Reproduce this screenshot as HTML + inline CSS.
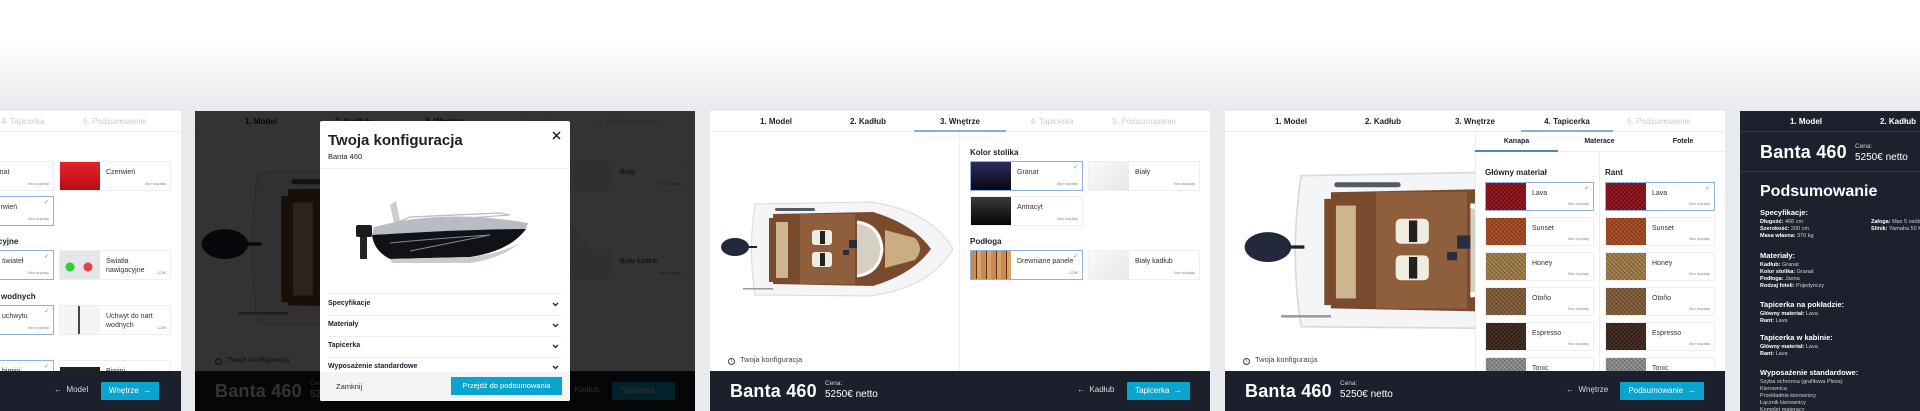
<!DOCTYPE html>
<html><head><meta charset="utf-8">
<style>
*{margin:0;padding:0;box-sizing:border-box}
html,body{width:1920px;height:411px;overflow:hidden}
body{position:relative;font-family:"Liberation Sans",sans-serif;color:#1b202c;background:linear-gradient(#fff 0,#fff 40px,#e8eaed 111px,#e8eaed 411px)}
#w{position:absolute;left:0;top:0;width:1920px;height:411px;overflow:hidden}
.p{position:absolute;top:111px;width:500px;height:300px;background:#fff;overflow:hidden}
.tabs{position:absolute;left:0;top:0;width:500px;height:21px;border-bottom:1px solid #eceef2}
.t{position:absolute;top:0;width:92px;height:21px;line-height:21px;text-align:center;font-size:8px;font-weight:bold;color:#1b202c}
.t.d{color:#c6cbd3;font-weight:normal}
.t.a{border-bottom:2px solid #86aede}
.ft{position:absolute;left:0;top:260px;width:500px;height:40px;background:#1b202c;color:#fff}
.bn{position:absolute;left:20px;top:10px;font-size:18px;font-weight:600;letter-spacing:.2px}
.cn{position:absolute;left:115px;top:9px;font-size:6.5px;color:#cfd3da}
.pr{position:absolute;left:115px;top:18px;font-size:10px}
.bk{position:absolute;top:14px;font-size:8px;color:#d8dbe0}
.btn{position:absolute;top:11px;height:18px;background:#0ba4cf;color:#fff;font-size:8px;line-height:18px;text-align:center;border-radius:1px}
.c{position:absolute;height:30px;border:1px solid #eceef2;background:#fff}
.c.s{border-color:#8fb2dc}
.sw{position:absolute;left:0;top:0;bottom:0;width:40px}
.nm{position:absolute;left:46px;top:6px;font-size:7px;color:#333;line-height:9px}
.bz{position:absolute;right:4px;bottom:4px;font-size:4px;color:#888}
.ck{position:absolute;right:4px;top:2px;font-size:6px;color:#4a90d9}
.h{position:absolute;font-size:8px;font-weight:bold;color:#1b202c}
.fab{background-image:repeating-linear-gradient(45deg,rgba(0,0,0,.25) 0 1px,transparent 1px 3px),repeating-linear-gradient(-45deg,rgba(255,255,255,.12) 0 1px,transparent 1px 3px)}
.info{position:absolute;font-size:7.5px;color:#444}
.info i{display:inline-block;width:7px;height:7px;border:1px solid #444;border-radius:50%;font-size:5px;line-height:5px;text-align:center;font-style:normal;margin-right:5px;vertical-align:0}
.sm{font-size:5.5px;color:#cfd3da;line-height:7px}
.sm b{color:#fff;font-weight:bold}
.chev{position:absolute;left:232px}
</style></head><body><div id="w">

<svg width="0" height="0" style="position:absolute">
<defs>
<g id="top">
<path d="M10,4 L125,2 Q185,10 208,49 Q185,88 125,96 L10,95 Q3,50 10,4 Z" fill="#f4f5f7" stroke="#d6d9de" stroke-width="1"/>
<path d="M28,14 L128,12 Q168,24 186,49 Q168,74 128,86 L28,84 Z" fill="#7a4a2d"/>
<rect x="55" y="14" width="55" height="70" fill="#8f5e3d"/>
<path d="M140,30 L170,38 Q180,49 170,60 L140,68 Z" fill="#c8ae80"/>
<rect x="24" y="18" width="8" height="64" fill="#7a4a2d"/>
<rect x="31" y="22" width="12" height="56" fill="#cdb58e"/>
<rect x="67" y="30" width="20" height="15" rx="3" fill="#f1ece0"/>
<rect x="75" y="31" width="5" height="13" fill="#222"/>
<rect x="67" y="52" width="20" height="15" rx="3" fill="#f1ece0"/>
<rect x="75" y="53" width="5" height="13" fill="#222"/>
<path d="M112,22 Q135,25 137,49 Q135,73 112,76" fill="#d4d0c2" stroke="#fff" stroke-width="3"/>
<rect x="104" y="40" width="8" height="8" fill="#2a2e3c"/>
<rect x="98" y="50" width="6" height="5" fill="#2a2e3c"/>
<rect x="30" y="8" width="40" height="3" rx="1.5" fill="#555a66"/>
<ellipse cx="-10" cy="47" rx="14" ry="9" fill="#23283b"/>
<rect x="2" y="46" width="10" height="2" fill="#222"/>
<rect x="-2" y="88" width="30" height="1.5" fill="#999"/>
</g>
</defs>
</svg>

<!-- PANEL 1 -->
<div class="p" style="left:-319px">
 <div class="tabs">
  <div class="t" style="left:20px">1. Model</div><div class="t a" style="left:112px">2. Kadłub</div><div class="t d" style="left:204px">3. Wnętrze</div><div class="t d" style="left:296px">4. Tapicerka</div><div class="t d" style="left:388px">5. Podsumowanie</div>
 </div>
 <div class="c" style="left:260px;top:50px;width:113px"><div class="sw" style="background:#1d2040"></div><div class="nm">Granat</div><div class="bz">Bez dopłaty</div></div>
 <div class="c" style="left:378px;top:50px;width:112px"><div class="sw" style="background:linear-gradient(#e4262a,#b90d12)"></div><div class="nm">Czerwień</div><div class="bz">Bez dopłaty</div></div>
 <div class="c s" style="left:260px;top:85px;width:113px"><div class="sw" style="background:#ccc"></div><div class="nm">Czerwień</div><div class="ck">✓</div><div class="bz">Bez dopłaty</div></div>
 <div class="h" style="left:260px;top:126px">Światła nawigacyjne</div>
 <div class="c s" style="left:260px;top:139px;width:113px"><div class="sw" style="background:#eee"></div><div class="nm">Bez świateł</div><div class="ck">✓</div><div class="bz">Bez dopłaty</div></div>
 <div class="c" style="left:378px;top:139px;width:112px"><div class="sw" style="background:radial-gradient(circle at 10px 16px,#3c3 0 4px,transparent 5px),radial-gradient(circle at 28px 16px,#d44 0 4px,transparent 5px),#e4e6ea"></div><div class="nm">Światła<br>nawigacyjne</div><div class="bz">123€</div></div>
 <div class="h" style="left:260px;top:181px">Uchwyt do nart wodnych</div>
 <div class="c s" style="left:260px;top:194px;width:113px"><div class="sw" style="background:#eee"></div><div class="nm">Bez uchwytu</div><div class="ck">✓</div><div class="bz">Bez dopłaty</div></div>
 <div class="c" style="left:378px;top:194px;width:112px"><div class="sw" style="background:linear-gradient(90deg,#f5f5f5 0 18px,#444 18px 20px,#f5f5f5 20px)"></div><div class="nm">Uchwyt do nart<br>wodnych</div><div class="bz">123€</div></div>
 <div class="c s" style="left:260px;top:249px;width:113px"><div class="sw" style="background:#eee"></div><div class="nm">Bez bimini</div><div class="ck">✓</div></div>
 <div class="c" style="left:378px;top:249px;width:112px"><div class="sw" style="background:linear-gradient(#fff 0 6px,#222 6px)"></div><div class="nm">Bimini</div></div>
 <div class="ft">
  <div class="bn">Banta 460</div>
  <div class="bk" style="left:373px">←&nbsp; Model</div>
  <div class="btn" style="left:420px;width:58px">Wnętrze &nbsp;→</div>
 </div>
</div>

<!-- PANEL 2 -->
<div class="p" style="left:195px">
 <div class="tabs">
  <div class="t" style="left:20px">1. Model</div><div class="t" style="left:112px">2. Kadłub</div><div class="t" style="left:204px">3. Wnętrze</div><div class="t d" style="left:296px">4. Tapicerka</div><div class="t d" style="left:388px">5. Podsumowanie</div>
 </div>
 <svg style="position:absolute;left:5px;top:55px" width="390" height="166" viewBox="-25 0 235 100"><use href="#top"/></svg>
 <div class="c" style="left:378px;top:50px;width:112px"><div class="sw" style="background:#eee"></div><div class="nm">Biały</div><div class="bz">Bez dopłaty</div></div>
 <div class="c" style="left:378px;top:139px;width:112px"><div class="sw" style="background:#eee"></div><div class="nm">Biały kadłub</div><div class="bz">Bez dopłaty</div></div>
 <div class="info" style="left:20px;top:244px"><i>i</i>Twoja konfiguracja</div>
 <div class="ft">
  <div class="bn">Banta 460</div><div class="cn">Cena:</div><div class="pr">5250€ netto</div>
  <div class="bk" style="left:367px">←&nbsp; Kadłub</div>
  <div class="btn" style="left:417px;width:63px">Tapicerka &nbsp;→</div>
 </div>
 <div style="position:absolute;left:0;top:0;width:500px;height:300px;background:rgba(0,0,0,.8)"></div>
 <div style="position:absolute;left:125px;top:10px;width:250px;height:280px;background:#fff;border-radius:2px;overflow:hidden">
  <div style="position:absolute;left:8px;top:11px;font-size:15px;font-weight:600">Twoja konfiguracja</div>
  <div style="position:absolute;left:8px;top:31px;font-size:7.5px">Banta 460</div>
  <svg style="position:absolute;left:232px;top:10px" width="9" height="9" viewBox="0 0 9 9"><path d="M1,1 L8,8 M8,1 L1,8" stroke="#1b202c" stroke-width="1.5"/></svg>
  <div style="position:absolute;left:0;top:47px;width:250px;border-top:1px solid #eceef2"></div>
  <svg style="position:absolute;left:30px;top:78px" width="184" height="68" viewBox="0 0 184 68">
   <path d="M40,6 L46,2 L50,22 L44,24 Z" fill="#c9ccd2"/>
   <path d="M46,24 L160,16 L150,14 L60,18 Z" fill="none" stroke="#bbb" stroke-width="1.2"/>
   <path d="M50,22 Q110,12 178,24 L176,30 Q120,30 22,36 L24,28 Z" fill="#b8bcc4"/>
   <path d="M22,36 Q120,30 176,30 Q160,52 120,58 L40,60 Q24,52 22,36 Z" fill="#101218"/>
   <path d="M40,44 Q80,40 140,36 Q90,46 60,52" fill="none" stroke="#888" stroke-width="1"/>
   <path d="M40,60 L120,58 Q150,55 170,44 Q150,60 120,64 L42,64 Z" fill="#c8ccd2"/>
   <rect x="6" y="26" width="16" height="12" rx="2" fill="#1a1c22"/>
   <rect x="10" y="38" width="7" height="22" fill="#22242a"/>
  </svg>
  <div style="position:absolute;left:8px;right:8px;top:172px;border-top:1px solid #eceef2"></div>
  <div style="position:absolute;left:8px;right:8px;top:194px;border-top:1px solid #eceef2"></div>
  <div style="position:absolute;left:8px;right:8px;top:215px;border-top:1px solid #eceef2"></div>
  <div style="position:absolute;left:8px;right:8px;top:236px;border-top:1px solid #eceef2"></div>
  <div class="h" style="left:8px;top:179px;font-size:7px">Specyfikacje</div>
  <div class="h" style="left:8px;top:200px;font-size:7px">Materiały</div>
  <div class="h" style="left:8px;top:221px;font-size:7px">Tapicerka</div>
  <div class="h" style="left:8px;top:242px;font-size:7px">Wyposażenie standardowe</div>
  <svg class="chev" style="top:181px" width="7" height="5" viewBox="0 0 7 5"><path d="M1,1 L3.5,3.5 L6,1" fill="none" stroke="#1b202c" stroke-width="1.3"/></svg>
  <svg class="chev" style="top:202px" width="7" height="5" viewBox="0 0 7 5"><path d="M1,1 L3.5,3.5 L6,1" fill="none" stroke="#1b202c" stroke-width="1.3"/></svg>
  <svg class="chev" style="top:223px" width="7" height="5" viewBox="0 0 7 5"><path d="M1,1 L3.5,3.5 L6,1" fill="none" stroke="#1b202c" stroke-width="1.3"/></svg>
  <svg class="chev" style="top:244px" width="7" height="5" viewBox="0 0 7 5"><path d="M1,1 L3.5,3.5 L6,1" fill="none" stroke="#1b202c" stroke-width="1.3"/></svg>
  <div style="position:absolute;left:0;top:251px;width:250px;height:29px;background:#f3f4f6">
   <div style="position:absolute;left:16px;top:10px;font-size:7.5px;color:#333">Zamknij</div>
   <div style="position:absolute;left:131px;top:5px;width:111px;height:18px;background:#0ba4cf;color:#fff;font-size:7.5px;line-height:18px;text-align:center">Przejdź do podsumowania</div>
  </div>
 </div>
</div>

<!-- PANEL 3 -->
<div class="p" style="left:710px">
 <div class="tabs">
  <div class="t" style="left:20px">1. Model</div><div class="t" style="left:112px">2. Kadłub</div><div class="t a" style="left:204px">3. Wnętrze</div><div class="t d" style="left:296px">4. Tapicerka</div><div class="t d" style="left:388px">5. Podsumowanie</div>
 </div>
 <div style="position:absolute;left:249px;top:21px;height:239px;border-left:1px solid #eceef2"></div>
 <svg style="position:absolute;left:10px;top:89px" width="235" height="100" viewBox="-25 0 235 100"><use href="#top"/></svg>
 <div class="h" style="left:260px;top:37px">Kolor stolika</div>
 <div class="c s" style="left:260px;top:50px;width:113px"><div class="sw" style="background:linear-gradient(#2a2d5c,#070814)"></div><div class="nm">Granat</div><div class="ck">✓</div><div class="bz">Bez dopłaty</div></div>
 <div class="c" style="left:378px;top:50px;width:112px"><div class="sw" style="background:linear-gradient(135deg,#fafafa,#e6e6e6)"></div><div class="nm">Biały</div><div class="bz">Bez dopłaty</div></div>
 <div class="c" style="left:260px;top:85px;width:113px"><div class="sw" style="background:linear-gradient(#3a3a3a,#050505)"></div><div class="nm">Antracyt</div><div class="bz">Bez dopłaty</div></div>
 <div class="h" style="left:260px;top:126px">Podłoga</div>
 <div class="c s" style="left:260px;top:139px;width:113px"><div class="sw" style="background:repeating-linear-gradient(90deg,#c98a52 0 5px,#5a3418 5px 6px,#d9a068 6px 10px)"></div><div class="nm">Drewniane panele</div><div class="ck">✓</div><div class="bz">123€</div></div>
 <div class="c" style="left:378px;top:139px;width:112px"><div class="sw" style="background:linear-gradient(135deg,#fafafa,#e8e8e8)"></div><div class="nm">Biały kadłub</div><div class="bz">Bez dopłaty</div></div>
 <div class="info" style="left:18px;top:244px"><i>i</i>Twoja konfiguracja</div>
 <div class="ft">
  <div class="bn">Banta 460</div><div class="cn">Cena:</div><div class="pr">5250€ netto</div>
  <div class="bk" style="left:367px">←&nbsp; Kadłub</div>
  <div class="btn" style="left:417px;width:63px">Tapicerka &nbsp;→</div>
 </div>
</div>

<!-- PANEL 4 -->
<div class="p" style="left:1225px">
 <div class="tabs">
  <div class="t" style="left:20px">1. Model</div><div class="t" style="left:112px">2. Kadłub</div><div class="t" style="left:204px">3. Wnętrze</div><div class="t a" style="left:296px">4. Tapicerka</div><div class="t d" style="left:388px">5. Podsumowanie</div>
 </div>
 <svg style="position:absolute;left:18px;top:58px" width="390" height="166" viewBox="-25 0 235 100"><use href="#top"/></svg>
 <div style="position:absolute;left:250px;top:21px;width:250px;height:239px;background:#fff;border-left:1px solid #eceef2"></div>
 <div style="position:absolute;left:250px;top:21px;width:250px;height:20px;border-bottom:1px solid #eceef2"></div>
 <div class="t" style="left:250px;top:21px;width:83px;height:20px;line-height:20px;font-size:7px;border-bottom:2px solid #4f86c6">Kanapa</div>
 <div class="t" style="left:333px;top:21px;width:83px;height:20px;line-height:20px;font-size:7px">Materace</div>
 <div class="t" style="left:416px;top:21px;width:84px;height:20px;line-height:20px;font-size:7px">Fotele</div>
 <div style="position:absolute;left:374px;top:41px;height:219px;border-left:1px solid #eceef2"></div>
 <div class="h" style="left:260px;top:57px">Główny materiał</div>
 <div class="h" style="left:380px;top:57px">Rant</div>
 <div class="c s" style="left:260px;top:71px;width:109px;height:29px"><div class="sw fab" style="background-color:#8c0c16"></div><div class="nm">Lava</div><div class="ck">✓</div><div class="bz">Bez dopłaty</div></div>
 <div class="c s" style="left:380px;top:71px;width:110px;height:29px"><div class="sw fab" style="background-color:#8c0c16"></div><div class="nm">Lava</div><div class="ck">✓</div><div class="bz">Bez dopłaty</div></div>
 <div class="c" style="left:260px;top:106px;width:109px;height:29px"><div class="sw fab" style="background-color:#a5481d"></div><div class="nm">Sunset</div><div class="bz">Bez dopłaty</div></div>
 <div class="c" style="left:380px;top:106px;width:110px;height:29px"><div class="sw fab" style="background-color:#a5481d"></div><div class="nm">Sunset</div><div class="bz">Bez dopłaty</div></div>
 <div class="c" style="left:260px;top:141px;width:109px;height:29px"><div class="sw fab" style="background-color:#a07c46"></div><div class="nm">Honey</div><div class="bz">Bez dopłaty</div></div>
 <div class="c" style="left:380px;top:141px;width:110px;height:29px"><div class="sw fab" style="background-color:#a07c46"></div><div class="nm">Honey</div><div class="bz">Bez dopłaty</div></div>
 <div class="c" style="left:260px;top:176px;width:109px;height:29px"><div class="sw fab" style="background-color:#7e5b35"></div><div class="nm">Otoño</div><div class="bz">Bez dopłaty</div></div>
 <div class="c" style="left:380px;top:176px;width:110px;height:29px"><div class="sw fab" style="background-color:#7e5b35"></div><div class="nm">Otoño</div><div class="bz">Bez dopłaty</div></div>
 <div class="c" style="left:260px;top:211px;width:109px;height:29px"><div class="sw fab" style="background-color:#3a2419"></div><div class="nm">Espresso</div><div class="bz">Bez dopłaty</div></div>
 <div class="c" style="left:380px;top:211px;width:110px;height:29px"><div class="sw fab" style="background-color:#3a2419"></div><div class="nm">Espresso</div><div class="bz">Bez dopłaty</div></div>
 <div class="c" style="left:260px;top:246px;width:109px;height:29px"><div class="sw fab" style="background-color:#8c8c8c"></div><div class="nm">Tonic</div></div>
 <div class="c" style="left:380px;top:246px;width:110px;height:29px"><div class="sw fab" style="background-color:#8c8c8c"></div><div class="nm">Tonic</div></div>
 <div class="info" style="left:18px;top:244px"><i>i</i>Twoja konfiguracja</div>
 <div class="ft">
  <div class="bn">Banta 460</div><div class="cn">Cena:</div><div class="pr">5250€ netto</div>
  <div class="bk" style="left:341px">←&nbsp; Wnętrze</div>
  <div class="btn" style="left:395px;width:84px">Podsumowanie &nbsp;→</div>
 </div>
</div>

<!-- PANEL 5 -->
<div class="p" style="left:1740px;width:180px;background:#1c212d;color:#fff">
 <div class="tabs" style="border-color:#2e3442">
  <div class="t" style="left:20px;color:#fff">1. Model</div><div class="t" style="left:112px;color:#fff">2. Kadłub</div>
 </div>
 <div class="bn" style="top:31px">Banta 460</div>
 <div class="cn" style="top:32px">Cena:</div><div class="pr" style="top:41px">5250€ netto</div>
 <div style="position:absolute;left:0;top:60px;width:500px;border-top:1px solid #2e3442"></div>
 <div style="position:absolute;left:20px;top:72px;font-size:16px;font-weight:bold">Podsumowanie</div>
 <div style="position:absolute;left:20px;top:97px;font-size:7.5px;font-weight:bold">Specyfikacje:</div>
 <div class="sm" style="position:absolute;left:20px;top:108px"><b>Długość:</b> 466 cm<br><b>Szerokość:</b> 200 cm<br><b>Masa własna:</b> 370 kg</div>
 <div class="sm" style="position:absolute;left:131px;top:108px;white-space:nowrap"><b>Załoga:</b> Max 5 osób<br><b>Silnik:</b> Yamaha 50 KM</div>
 <div style="position:absolute;left:20px;top:140px;font-size:7.5px;font-weight:bold">Materiały:</div>
 <div class="sm" style="position:absolute;left:20px;top:151px"><b>Kadłub:</b> Granat<br><b>Kolor stolika:</b> Granat<br><b>Podłoga:</b> Jasna<br><b>Rodzaj foteli:</b> Pojedynczy</div>
 <div style="position:absolute;left:20px;top:189px;font-size:7.5px;font-weight:bold">Tapicerka na pokładzie:</div>
 <div class="sm" style="position:absolute;left:20px;top:200px"><b>Główny materiał:</b> Lava<br><b>Rant:</b> Lava</div>
 <div style="position:absolute;left:20px;top:222px;font-size:7.5px;font-weight:bold">Tapicerka w kabinie:</div>
 <div class="sm" style="position:absolute;left:20px;top:233px"><b>Główny materiał:</b> Lava<br><b>Rant:</b> Lava</div>
 <div style="position:absolute;left:20px;top:257px;font-size:7.5px;font-weight:bold">Wyposażenie standardowe:</div>
 <div class="sm" style="position:absolute;left:20px;top:268px">Szyba ochronna (grafitowa Plexa)<br>Kierownica<br>Przekładnia kierownicy<br>Łącznik kierownicy<br>Komplet materacy</div>
</div>

</div></body></html>
